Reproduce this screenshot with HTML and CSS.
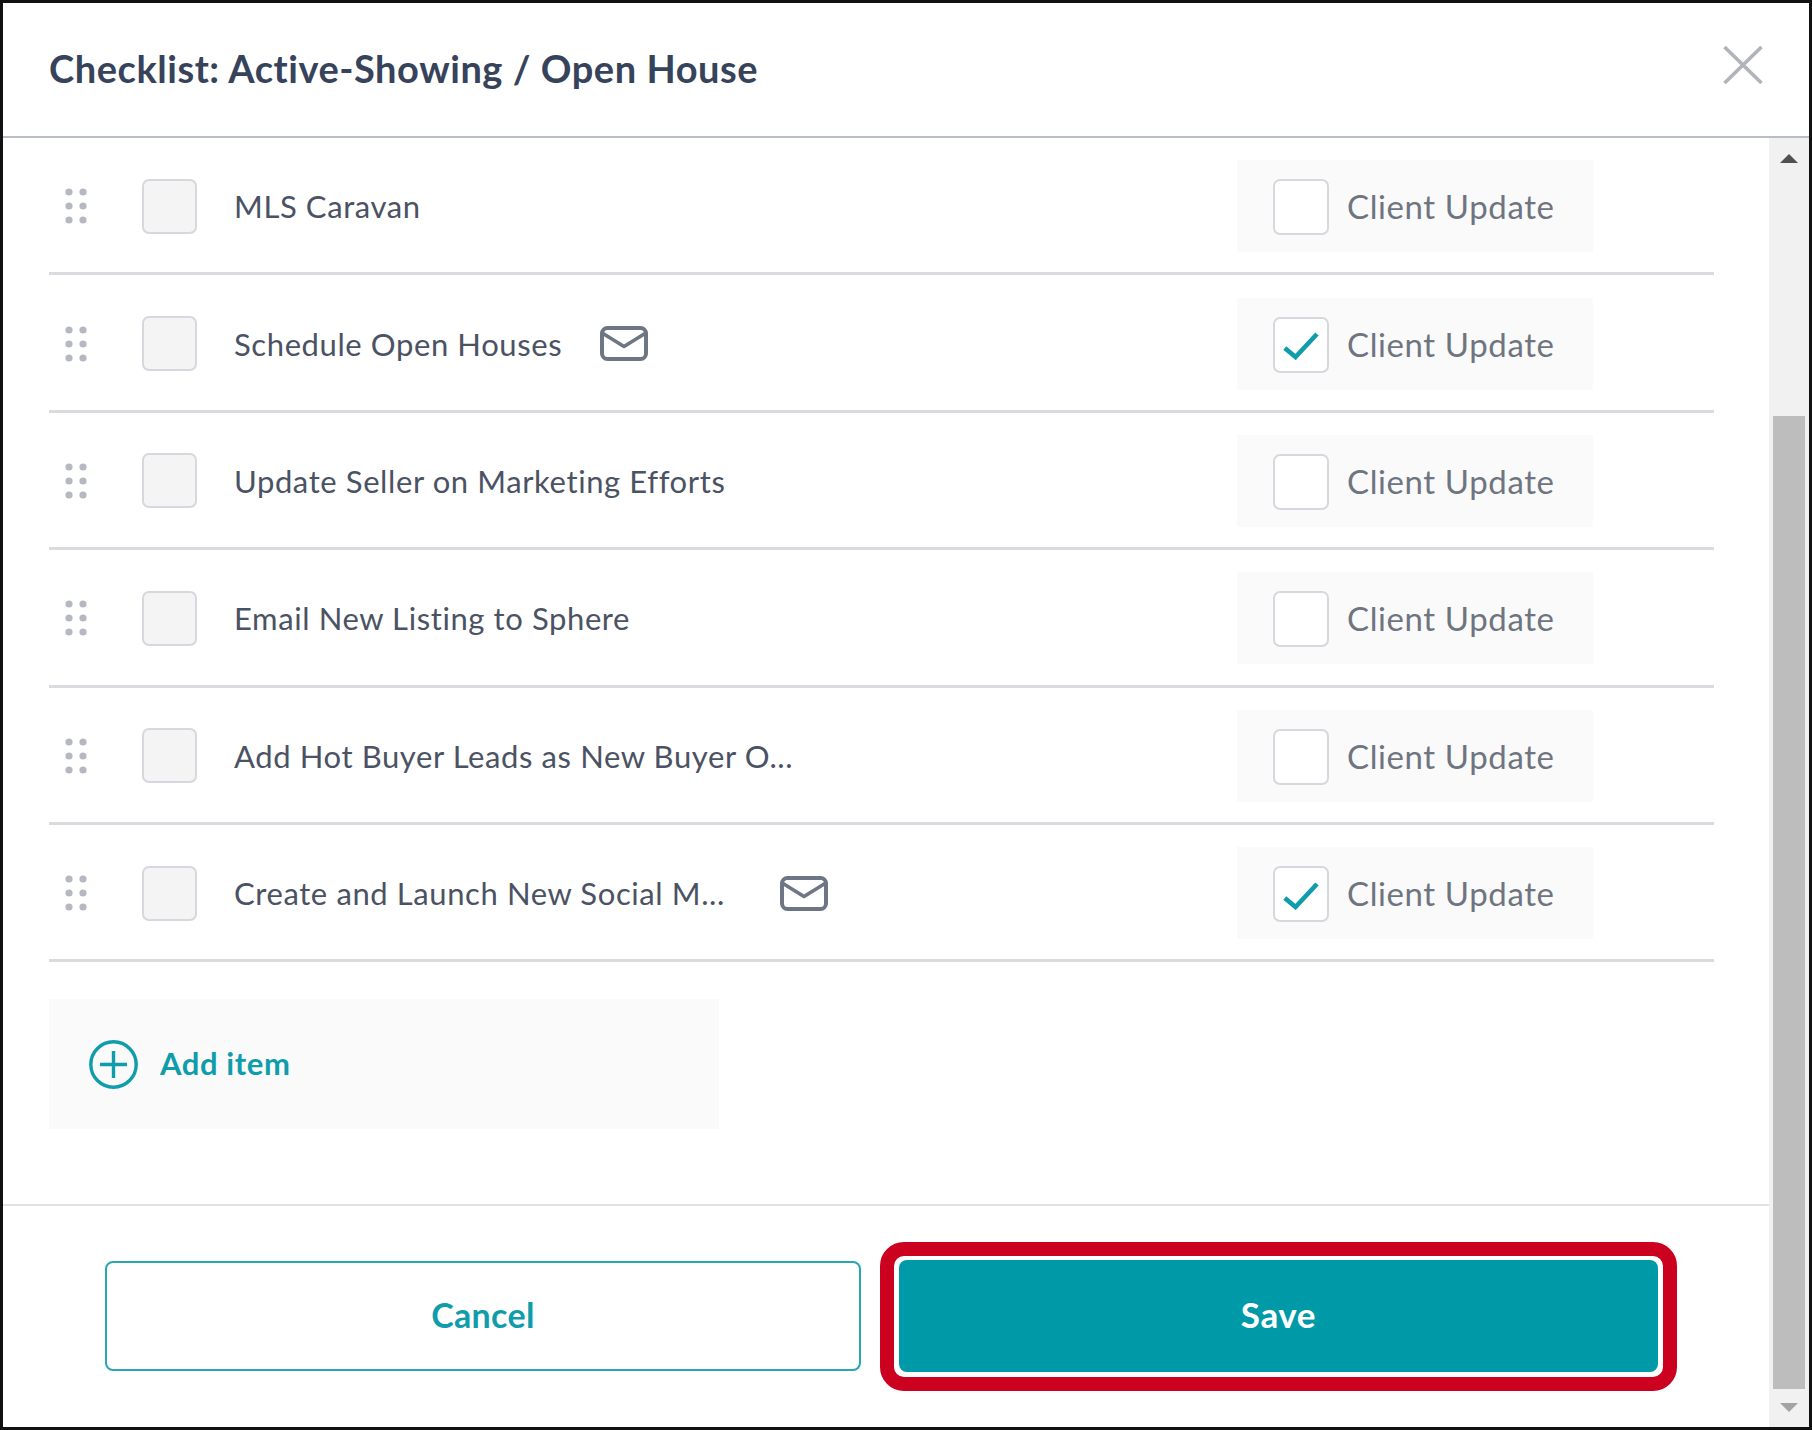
FILE: index.html
```html
<!DOCTYPE html>
<html lang="en">
<head>
<meta charset="utf-8">
<title>Checklist</title>
<link rel="stylesheet" href="styles.css">
</head>
<body>
<svg class="defs" width="0" height="0" aria-hidden="true">
  <defs>
    <symbol id="dots" viewBox="0 0 22 36">
      <circle cx="4" cy="4" r="3.6"/><circle cx="18" cy="4" r="3.6"/>
      <circle cx="4" cy="18" r="3.6"/><circle cx="18" cy="18" r="3.6"/>
      <circle cx="4" cy="32" r="3.6"/><circle cx="18" cy="32" r="3.6"/>
    </symbol>
    <symbol id="mail" viewBox="0 0 48 35">
      <rect x="2" y="2" width="44" height="31" rx="5.5" fill="none" stroke="currentColor" stroke-width="4"/>
      <path d="M3 7.5 L24 20.5 L45 7.5" fill="none" stroke="currentColor" stroke-width="3.6" stroke-linejoin="round"/>
    </symbol>
    <symbol id="tick" viewBox="0 0 36 28">
      <path d="M1.8 16 L12.5 25 L34 2" fill="none" stroke="currentColor" stroke-width="4.6"/>
    </symbol>
  </defs>
</svg>
<div class="modal">
  <header class="head">
    <h1 class="title">Checklist: Active-Showing / Open House</h1>
    <svg class="close" viewBox="0 0 40 38" aria-label="Close"><path d="M1.5 1 L38.5 37 M38.5 1 L1.5 37" fill="none" stroke="#b1b4ba" stroke-width="3.6"/></svg>
  </header>
  <div class="body">
    <div class="main">
      <div class="scroll">
        <ul class="list">
          <li class="row">
            <svg class="drag"><use href="#dots"/></svg>
            <span class="box"></span>
            <span class="label">MLS Caravan</span>
            <div class="update"><span class="cbox"></span><span class="update-text">Client Update</span></div>
          </li>
          <li class="row">
            <svg class="drag"><use href="#dots"/></svg>
            <span class="box"></span>
            <span class="label label-short">Schedule Open Houses</span>
            <svg class="mail"><use href="#mail"/></svg>
            <div class="update"><span class="cbox"><svg class="tick"><use href="#tick"/></svg></span><span class="update-text">Client Update</span></div>
          </li>
          <li class="row">
            <svg class="drag"><use href="#dots"/></svg>
            <span class="box"></span>
            <span class="label">Update Seller on Marketing Efforts</span>
            <div class="update"><span class="cbox"></span><span class="update-text">Client Update</span></div>
          </li>
          <li class="row">
            <svg class="drag"><use href="#dots"/></svg>
            <span class="box"></span>
            <span class="label">Email New Listing to Sphere</span>
            <div class="update"><span class="cbox"></span><span class="update-text">Client Update</span></div>
          </li>
          <li class="row">
            <svg class="drag"><use href="#dots"/></svg>
            <span class="box"></span>
            <span class="label">Add Hot Buyer Leads as New Buyer O...</span>
            <div class="update"><span class="cbox"></span><span class="update-text">Client Update</span></div>
          </li>
          <li class="row">
            <svg class="drag"><use href="#dots"/></svg>
            <span class="box"></span>
            <span class="label label-long">Create and Launch New Social M...</span>
            <svg class="mail"><use href="#mail"/></svg>
            <div class="update"><span class="cbox"><svg class="tick"><use href="#tick"/></svg></span><span class="update-text">Client Update</span></div>
          </li>
        </ul>
        <div class="add">
          <svg class="plus" viewBox="0 0 49 49"><circle cx="24.5" cy="24.5" r="22.7" fill="none" stroke="#0f9dab" stroke-width="3.4"/><path d="M24.5 11 V38 M11 24.5 H38" fill="none" stroke="#0f9dab" stroke-width="3.4"/></svg>
          <span class="add-text">Add item</span>
        </div>
      </div>
      <footer class="foot">
        <button class="btn btn-cancel">Cancel</button>
        <div class="highlight"><button class="btn btn-save">Save</button></div>
      </footer>
    </div>
    <div class="bar">
      <div class="bar-top"><span class="arrow-up"></span></div>
      <div class="thumb"></div>
      <div class="bar-bottom"><span class="arrow-down"></span></div>
    </div>
  </div>
</div>
</body>
</html>
```

FILE: styles.css
```css
* { box-sizing: border-box; }
html, body { margin: 0; padding: 0; background: #fff; }
body { font-family: "Lato", "Noto Sans", sans-serif; }
.defs { position: absolute; }

.modal {
  width: 1812px;
  height: 1430px;
  border: 3px solid #111;
  display: flex;
  flex-direction: column;
  background: #fff;
}

.head {
  height: 135px;
  flex: none;
  border-bottom: 2px solid #b9bec4;
  display: flex;
  align-items: center;
  justify-content: space-between;
  padding: 0 46px 4px 46px;
}
.title {
  margin: 0;
  font-size: 38px;
  font-weight: 700;
  color: #36435a;
  letter-spacing: 0.55px;
}
.close { width: 40px; height: 38px; margin-top: -5px; }

.body { flex: 1; display: flex; min-height: 0; }
.main { flex: 1; display: flex; flex-direction: column; min-width: 0; }
.scroll { flex: 1; padding: 0 55px 0 46px; }

.list { list-style: none; margin: 0; padding: 0; }
.row {
  height: 137.4px;
  display: flex;
  align-items: center;
  border-bottom: 3px solid #d9dbdf;
  padding: 2px 0 0 16px;
}
.drag { width: 22px; height: 36px; fill: #b5b8c1; flex: none; }
.box {
  width: 55px;
  height: 55px;
  flex: none;
  margin-left: 55px;
  background: #f4f4f4;
  border: 2px solid #d5d8dd;
  border-radius: 7px;
}
.label {
  margin-left: 37px;
  font-size: 31px;
  color: #4b5263;
  letter-spacing: 0.6px;
  white-space: nowrap;
}
.label-short { width: 324px; }
.label-long { width: 504px; }
.mail { width: 48px; height: 35px; margin-left: 42px; color: #6e7585; flex: none; }

.update {
  margin-left: auto;
  margin-right: 121px;
  width: 356px;
  height: 92px;
  flex: none;
  background: #fafafa;
  display: flex;
  align-items: center;
  padding-left: 36px;
}
.cbox {
  width: 56px;
  height: 56px;
  flex: none;
  margin-top: 2px;
  background: #fff;
  border: 2px solid #d5d8dd;
  border-radius: 7px;
  display: flex;
  align-items: center;
  justify-content: center;
}
.tick { width: 36px; height: 28px; color: #0f9dab; margin-top: 3px; }
.update-text {
  margin-left: 18px;
  font-size: 33px;
  color: #6f7580;
  letter-spacing: 0.6px;
  white-space: nowrap;
}

.add {
  margin-top: 37px;
  width: 670px;
  height: 130px;
  background: #fafafa;
  display: flex;
  align-items: center;
  padding-left: 40px;
}
.plus { width: 49px; height: 49px; flex: none; }
.add-text {
  margin: 0 0 2px 22px;
  font-size: 31px;
  font-weight: 700;
  color: #0f9dab;
  letter-spacing: 0.6px;
}

.foot {
  height: 223px;
  flex: none;
  border-top: 2px solid #e1e1e6;
  display: flex;
  align-items: center;
  padding: 0 0 1px 102px;
}
.btn {
  font-family: inherit;
  font-weight: 700;
  border-radius: 8px;
  cursor: pointer;
  padding: 0 0 3px;
}
.btn-cancel {
  width: 756px;
  height: 110px;
  font-size: 34px;
  letter-spacing: 0.35px;
  background: #fff;
  color: #0f9dab;
  border: 2px solid #2aa6b2;
}
.highlight {
  margin-left: 19px;
  width: 797px;
  height: 149px;
  border: 14px solid #cc001f;
  border-radius: 24px;
  background: #fff;
  padding: 4px 5px 5px;
  display: flex;
}
.btn-save {
  flex: 1;
  font-size: 35px;
  letter-spacing: 0.6px;
  background: #0099a8;
  color: #fff;
  border: 0;
}

.bar {
  width: 40px;
  flex: none;
  background: #f1f1f1;
  display: flex;
  flex-direction: column;
  align-items: center;
}
.bar-top {
  height: 278px;
  flex: none;
  padding-top: 16px;
}
.arrow-up, .arrow-down {
  display: block;
  width: 0;
  height: 0;
  border-left: 9px solid transparent;
  border-right: 9px solid transparent;
}
.arrow-up { border-bottom: 9px solid #505050; }
.arrow-down { border-top: 9px solid #a3a3a3; }
.thumb { width: 32px; flex: 1; background: #bdbdbd; }
.bar-bottom { height: 38px; flex: none; padding-top: 14px; }
```
